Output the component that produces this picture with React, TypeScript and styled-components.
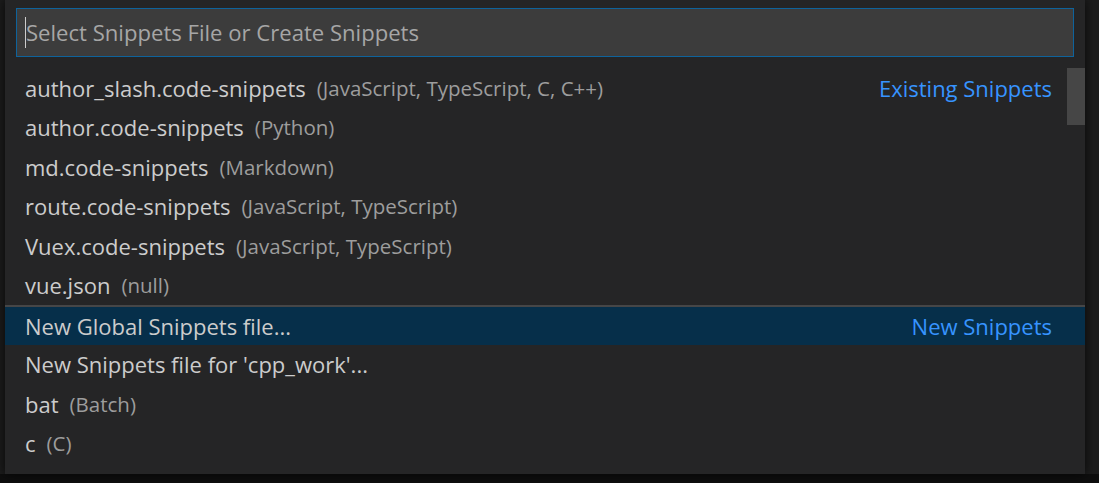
import React from "react";
import styled, { createGlobalStyle } from "styled-components";

const GlobalStyle = createGlobalStyle`
  html, body {
    margin: 0;
    padding: 0;
    background: #141414;
  }
`;

interface Item {
  label: string;
  description?: string;
  detail?: string;
  separator?: boolean;
  selected?: boolean;
}

const items: Item[] = [
  {
    label: "author_slash.code-snippets",
    description: "(JavaScript, TypeScript, C, C++)",
    detail: "Existing Snippets",
  },
  { label: "author.code-snippets", description: "(Python)" },
  { label: "md.code-snippets", description: "(Markdown)" },
  { label: "route.code-snippets", description: "(JavaScript, TypeScript)" },
  { label: "Vuex.code-snippets", description: "(JavaScript, TypeScript)" },
  { label: "vue.json", description: "(null)" },
  {
    label: "New Global Snippets file...",
    detail: "New Snippets",
    separator: true,
    selected: true,
  },
  { label: "New Snippets file for 'cpp_work'..." },
  { label: "bat", description: "(Batch)" },
  { label: "c", description: "(C)" },
];

const Page = styled.div`
  width: 1099px;
  height: 483px;
  padding-left: 5px;
  box-sizing: border-box;
  overflow: hidden;
  background: linear-gradient(to bottom, #1c1c1c 0, #1c1c1c 474px, #0e0e0e 474px);
  font-family: "Open Sans", "Noto Sans", sans-serif;
`;

const Panel = styled.div`
  width: 1080px;
  height: 474px;
  background: #252526;
  box-shadow: 0 0 10px rgba(0, 0, 0, 0.75);
  display: flex;
  flex-direction: column;
`;

const InputBar = styled.div`
  position: relative;
  padding: 8px 11px 0 11px;
`;

const Input = styled.input`
  width: 100%;
  height: 49px;
  box-sizing: border-box;
  background: #3c3c3c;
  border: 1px solid #0e639c;
  outline: none;
  color: #cccccc;
  caret-color: transparent;
  padding: 0 0 2px 9px;
  font-family: inherit;
  font-size: 22.1px;

  &::placeholder {
    color: #a6a6a6;
  }
`;

// text cursor drawn over the empty input
const Caret = styled.div`
  position: absolute;
  left: 20px;
  top: 17px;
  width: 1px;
  height: 31px;
  background: #cccccc;
  pointer-events: none;
`;

const List = styled.div`
  position: relative;
  margin-top: 11px;
`;

const Row = styled.div<{ $selected?: boolean; $separator?: boolean }>`
  height: 39.5px;
  box-sizing: border-box;
  display: flex;
  align-items: center;
  padding: 0 33px 0 20px;
  background: ${(p) => (p.$selected ? "#062f4a" : "transparent")};
  border-top: ${(p) => (p.$separator ? "2px solid #464647" : "none")};
`;

const Label = styled.span`
  color: #cccccc;
  font-size: 22px;
  white-space: nowrap;
`;

const Description = styled.span`
  color: #9d9d9d;
  font-size: 20.5px;
  margin-left: 11px;
  white-space: nowrap;
`;

const Detail = styled.span`
  margin-left: auto;
  color: #3794ff;
  font-size: 22px;
  white-space: nowrap;
`;

const ScrollThumb = styled.div`
  position: absolute;
  top: 0;
  right: 0;
  width: 18px;
  height: 57px;
  background: #464646;
`;

export default function App() {
  return (
    <>
      <GlobalStyle />
      <Page>
        <Panel>
          <InputBar>
            <Input placeholder="Select Snippets File or Create Snippets" />
            <Caret />
          </InputBar>
          <List>
            {items.map((item) => (
              <Row
                key={item.label}
                $selected={item.selected}
                $separator={item.separator}
              >
                <Label>{item.label}</Label>
                {item.description && <Description>{item.description}</Description>}
                {item.detail && <Detail>{item.detail}</Detail>}
              </Row>
            ))}
            <ScrollThumb />
          </List>
        </Panel>
      </Page>
    </>
  );
}
